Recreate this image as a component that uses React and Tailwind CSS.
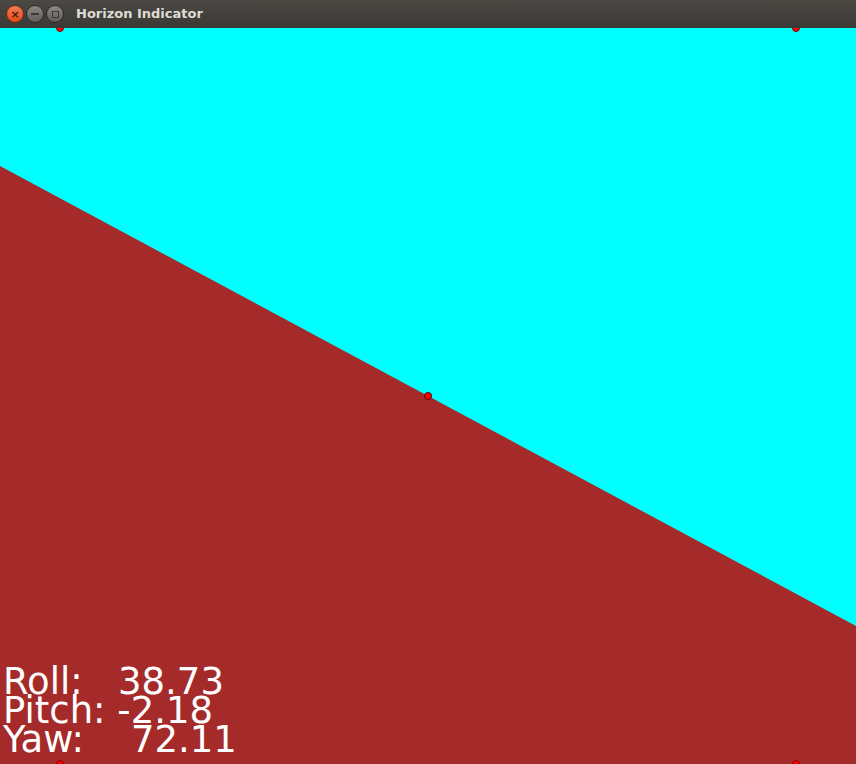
import React from 'react';

const readings = [
  ['Roll:', '  38.73'],
  ['Pitch:', '-2.18'],
  ['Yaw:', '   72.11'],
];

function TitleBar() {
  return (
    <div className="h-[28px] flex items-center bg-gradient-to-b from-[#4a4944] to-[#3a3935] px-[6px]">
      <div className="flex items-center gap-[2px]">
        <div className="w-[18px] h-[18px] rounded-full bg-gradient-to-b from-[#f47a52] to-[#de4a17] border border-[#6a2a10] flex items-center justify-center text-[#4a1a08] text-[11px] font-bold leading-none" style={{ fontFamily: 'DejaVu Sans, sans-serif' }}>
          ×
        </div>
        <div className="w-[18px] h-[18px] rounded-full bg-gradient-to-b from-[#8a8984] to-[#5f5e5a] border border-[#2c2b28] flex items-center justify-center">
          <div className="w-[8px] h-[2px] bg-[#3a3935]" />
        </div>
        <div className="w-[18px] h-[18px] rounded-full bg-gradient-to-b from-[#8a8984] to-[#5f5e5a] border border-[#2c2b28] flex items-center justify-center">
          <div className="w-[7px] h-[7px] border border-[#3a3935]" />
        </div>
      </div>
      <span
        className="ml-[12px] text-[13px] font-bold text-[#dfdbd2]"
        style={{ fontFamily: '"DejaVu Sans", sans-serif' }}
      >
        Horizon Indicator
      </span>
    </div>
  );
}

function Horizon() {
  return (
    <svg width="856" height="736" viewBox="0 0 856 736" className="block">
      <rect x="0" y="0" width="856" height="736" fill="#00ffff" />
      <polygon points="0,138 856,598 856,736 0,736" fill="#a52a2a" />
      <circle cx="60" cy="0" r="3.5" fill="#ff0000" stroke="#8b0000" strokeWidth="1" />
      <circle cx="796" cy="0" r="3.5" fill="#ff0000" stroke="#8b0000" strokeWidth="1" />
      <circle cx="60" cy="736" r="3.5" fill="#ff0000" stroke="#8b0000" strokeWidth="1" />
      <circle cx="796" cy="736" r="3.5" fill="#ff0000" stroke="#8b0000" strokeWidth="1" />
      <circle cx="428" cy="368" r="3.5" fill="#ff0000" stroke="#5a0000" strokeWidth="1" />
    </svg>
  );
}

export default function App() {
  return (
    <div className="w-[856px] h-[764px] overflow-hidden bg-[#a52a2a]">
      <TitleBar />
      <div className="relative w-[856px] h-[736px] overflow-hidden">
        <Horizon />
        <div
          className="absolute left-[3px] bottom-[10px] text-white text-[37px] leading-[29px] whitespace-pre"
          style={{ fontFamily: '"DejaVu Sans", sans-serif' }}
        >
          {readings.map(([label, value]) => (
            <div key={label}>
              {label} {value}
            </div>
          ))}
        </div>
      </div>
    </div>
  );
}
